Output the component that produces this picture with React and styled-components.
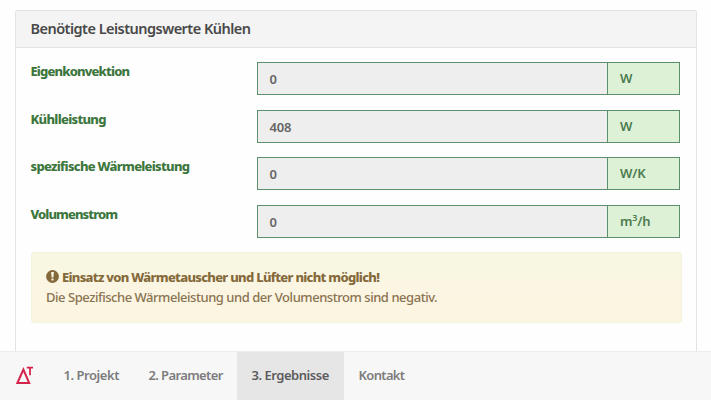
import React from "react";
import styled, { createGlobalStyle } from "styled-components";

const GlobalStyle = createGlobalStyle`
  * { box-sizing: border-box; }
  html, body { margin: 0; height: 100%; overflow: hidden; background: #fefefe; }
  body {
    font-family: "Noto Sans", "Open Sans", sans-serif;
    font-size: 13px;
    color: #555;
  }
`;

const Page = styled.div`
  display: flex;
  flex-direction: column;
  height: 400px;
  overflow: hidden;
`;

const Content = styled.main`
  flex: 1;
  min-height: 0;
  padding: 10px 14px 0 15px;
  display: flex;
`;

const Panel = styled.section`
  flex: 1;
  border: 1px solid #e2e2e2;
  border-bottom: 0;
  border-radius: 3px 3px 0 0;
  background: #fefefe;
`;

const PanelHeader = styled.header`
  height: 37px;
  padding-left: 14.5px;
  background: #f4f4f4;
  border-bottom: 1px solid #e2e2e2;
  border-radius: 2px 2px 0 0;
`;

const Text = styled.span`
  display: inline-block;
  white-space: nowrap;
  letter-spacing: ${(p) => p.$track || 0}px;
`;

const Title = styled.h3`
  margin: 0;
  font-size: 14.5px;
  font-weight: 600;
  line-height: 34px;
  color: #484848;
`;

const Fields = styled.div`
  display: flex;
  flex-direction: column;
  gap: 14.5px;
  padding: 14px 16px 0 14.5px;
`;

const Row = styled.div`
  display: grid;
  grid-template-columns: 226px 1fr;
  grid-template-rows: 33px;
  height: 33px;
`;

const Label = styled.label`
  font-size: 13px;
  line-height: 19px;
  font-weight: 800;
  color: #3c763d;
`;

const InputGroup = styled.div`
  display: grid;
  grid-template-columns: 1fr 72px;
  grid-template-rows: 31px;
  border: 1px solid #5c8f6c;
`;

const Value = styled.output`
  padding-left: 12px;
  font-size: 13px;
  font-weight: 600;
  line-height: 33px;
  letter-spacing: -0.2px;
  background: #eee;
  color: #666;
`;

const Unit = styled.span`
  padding-left: 12px;
  border-left: 1px solid #5c8f6c;
  background: #dcf1d5;
  color: #4c7a50;
  font-size: 13px;
  font-weight: 600;
  line-height: 30px;
  letter-spacing: -0.2px;

  sup {
    font-size: 9px;
    line-height: 0;
    vertical-align: 5px;
  }
`;

const Alert = styled.div`
  margin: 14.5px 14px 0 14.5px;
  height: 71px;
  padding: 15px 15px 0 14.5px;
  border: 1px solid #f4f3dd;
  border-radius: 3px;
  background: linear-gradient(#f7f8e1, #fcf5e3 60%, #fbf6e0);
  color: #8a7350;
  font-size: 13px;
  font-weight: 500;
  line-height: 19.5px;
`;

const AlertTitle = styled.div`
  display: flex;
  align-items: center;
  gap: 3px;
  height: 19.5px;
  font-weight: 800;
  color: #84693a;
`;

const AlertIcon = styled.svg`
  flex: none;
  margin-top: -2px;
`;

const Navbar = styled.nav`
  display: flex;
  flex: none;
  height: 49px;
  border-top: 1px solid #ececec;
  background: #f8f7f8;
`;

const Brand = styled.a`
  width: 49px;
  padding: 13px 0 0 15px;
`;

const NavItem = styled.a`
  width: ${(p) => p.$width}px;
  padding-left: 14.5px;
  font-size: 13px;
  font-weight: 600;
  line-height: 47px;
  background: ${(p) => (p.$active ? "#e7e6e7" : "transparent")};
  color: ${(p) => (p.$active ? "#5c5c5c" : "#7c7c7c")};
`;

const fields = [
  { label: "Eigenkonvektion", track: -0.85, value: "0", unit: "W" },
  { label: "Kühlleistung", track: -0.7, value: "408", unit: "W" },
  { label: "spezifische Wärmeleistung", track: -0.72, value: "0", unit: "W/K" },
  { label: "Volumenstrom", track: -0.92, value: "0", unit: <>m<sup>3</sup>/h</> },
];

const tabs = [
  { label: "1. Projekt", width: 85, track: -0.45 },
  { label: "2. Parameter", width: 103, track: -0.62 },
  { label: "3. Ergebnisse", width: 107, track: -0.47, active: true },
  { label: "Kontakt", width: 76, track: -0.65 },
];

const WarningIcon = () => (
  <AlertIcon width="13" height="13" viewBox="0 0 13 13">
    <circle cx="6.5" cy="6.5" r="6.4" fill="#84693a" />
    <path d="M5.1 2h2.8l-.5 5.4H5.6z" fill="#faf6e2" />
    <rect x="5.4" y="8.4" width="2.2" height="2.1" rx=".4" fill="#faf6e2" />
  </AlertIcon>
);

const DeltaLogo = () => (
  <svg width="20" height="20" viewBox="0 0 20 20" fill="none" stroke="#d5244c">
    <path d="M2.4 18L8.4 4.6L14.2 18Z" strokeWidth="2" />
    <path d="M11.8 2.6H18M15 2.4V10.2" strokeWidth="1.8" />
  </svg>
);

export default function App() {
  return (
    <Page>
      <GlobalStyle />
      <Content>
        <Panel>
          <PanelHeader>
            <Title><Text $track={-0.53}>Benötigte Leistungswerte Kühlen</Text></Title>
          </PanelHeader>
          <Fields>
            {fields.map((f) => (
              <Row key={f.label}>
                <Label><Text $track={f.track}>{f.label}</Text></Label>
                <InputGroup>
                  <Value>{f.value}</Value>
                  <Unit>{f.unit}</Unit>
                </InputGroup>
              </Row>
            ))}
          </Fields>
          <Alert>
            <AlertTitle>
              <WarningIcon />
              <Text $track={-0.71}>Einsatz von Wärmetauscher und Lüfter nicht möglich!</Text>
            </AlertTitle>
            <Text $track={-0.46}>Die Spezifische Wärmeleistung und der Volumenstrom sind negativ.</Text>
          </Alert>
        </Panel>
      </Content>
      <Navbar>
        <Brand><DeltaLogo /></Brand>
        {tabs.map((t) => (
          <NavItem key={t.label} $width={t.width} $active={t.active}>
            <Text $track={t.track}>{t.label}</Text>
          </NavItem>
        ))}
      </Navbar>
    </Page>
  );
}
